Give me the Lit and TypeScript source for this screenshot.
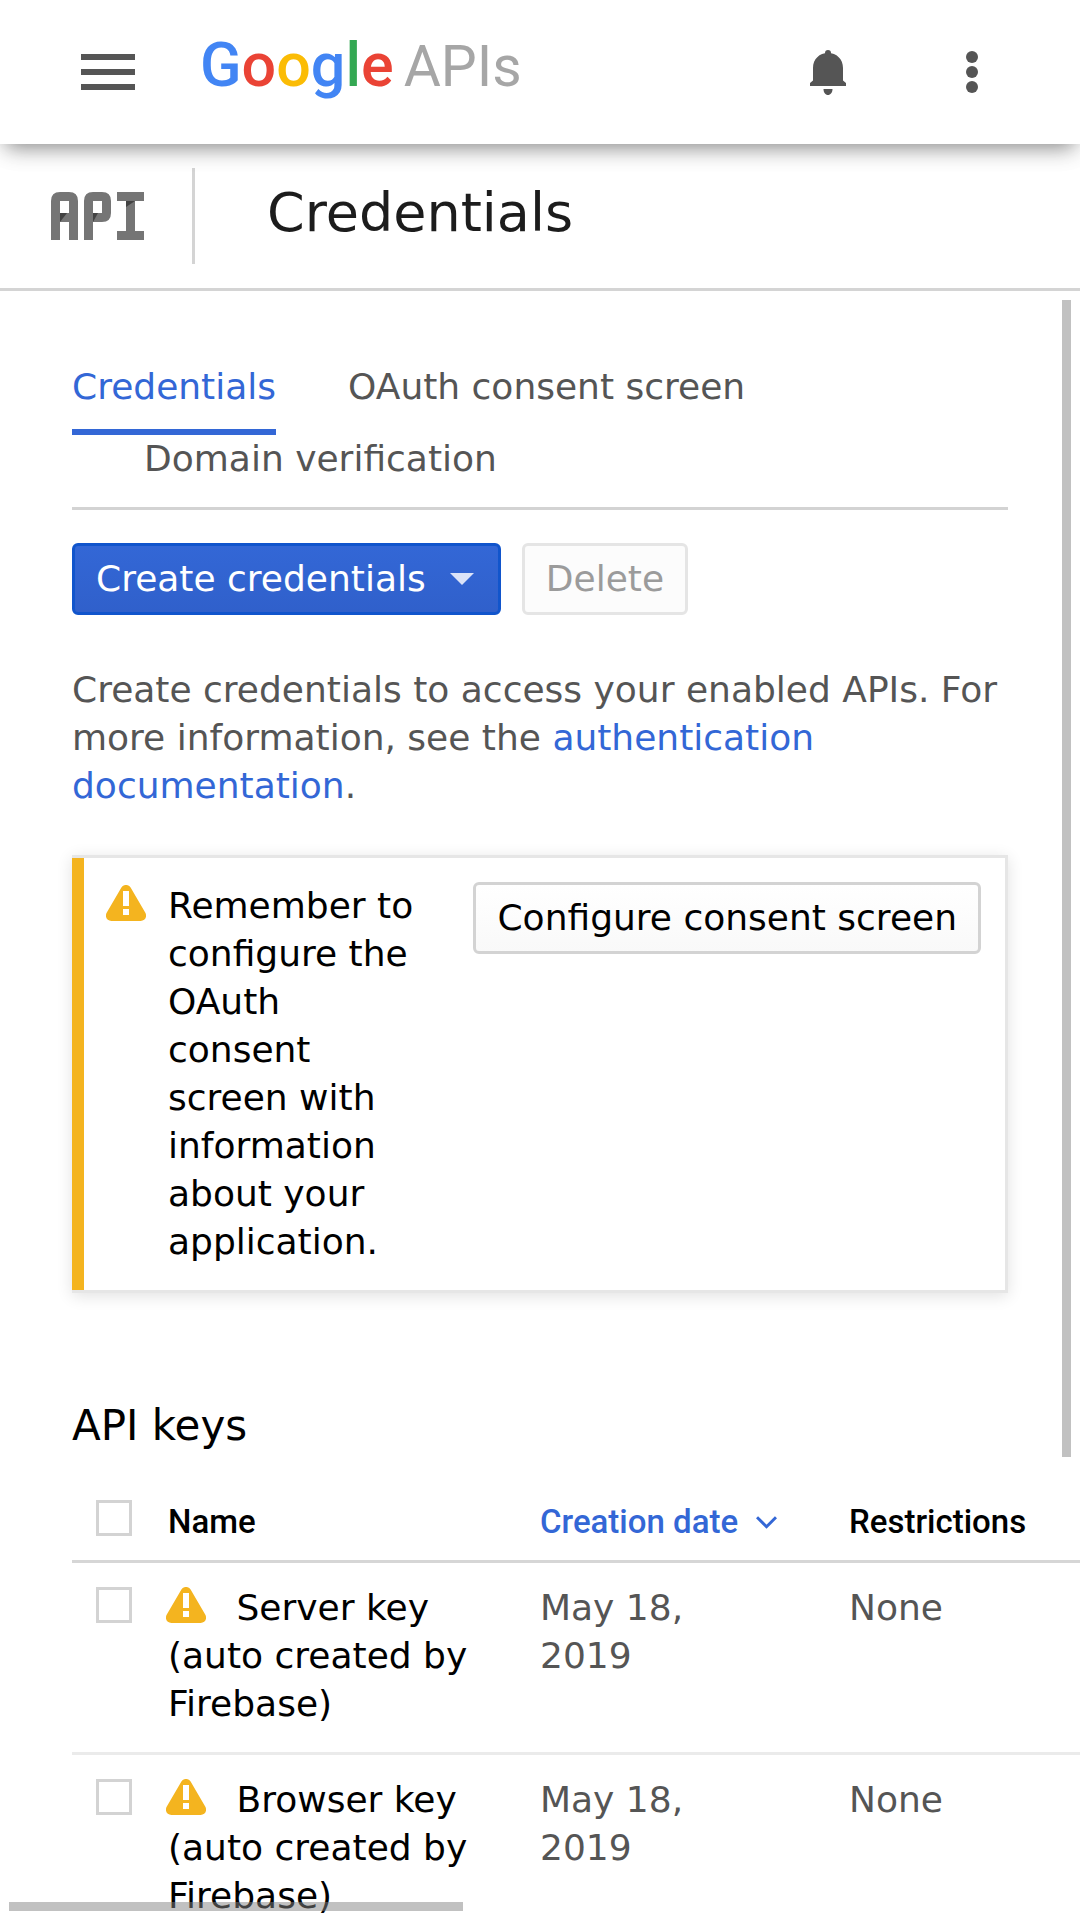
import { LitElement, html, css, svg } from "lit";
import { customElement, property } from "lit/decorators.js";

interface ApiKey {
  id: string;
  name: string;
  created: string;
  restrictions: string;
}

const KEYS: ApiKey[] = [
  { id: "server", name: "Server key (auto created by Firebase)", created: "May 18, 2019", restrictions: "None" },
  { id: "browser", name: "Browser key (auto created by Firebase)", created: "May 18, 2019", restrictions: "None" },
];

const TABS = ["Credentials", "OAuth consent screen", "Domain verification"];

const warningIcon = html`<svg class="warning" width="40" height="36" viewBox="0 0 40 36" role="img" aria-label="Warning">
  <path fill="#f4b41f" d="M15.4 2.6C17.4-.9 22.6-.9 24.6 2.6L39.2 27.6C41.6 31.8 38.9 36 34.6 36H5.4C1.1 36-1.6 31.8.8 27.6Z" />
  <path fill="#fff" d="M17 6h6v15h-6zM17 24h6v6h-6z" />
</svg>`;

const foldedShade = (points: string) => svg`<polygon fill="#424242" points=${points} />`;

@customElement("console-header")
class ConsoleHeader extends LitElement {
  static styles = css`
    :host {
      display: block;
      flex: none;
      position: relative;
      z-index: 1;
      background: #fff;
      box-shadow: 0 9px 20px -6px rgba(0, 0, 0, 0.46), 0 6px 30px rgba(0, 0, 0, 0.05);
    }
    .bar {
      display: flex;
      align-items: center;
      height: 144px;
      padding: 0 102px 0 81px;
    }
    button {
      display: flex;
      padding: 0;
      border: 0;
      background: none;
      color: #555;
      cursor: pointer;
    }
    svg {
      fill: currentColor;
    }
    .logo {
      display: flex;
      align-items: baseline;
      gap: 10px;
      margin-left: 65px;
      padding-bottom: 12px;
      font-family: Roboto, sans-serif;
      font-size: 61px;
      font-weight: 500;
      line-height: 72px;
      text-decoration: none;
    }
    .product {
      color: #a6a6a6;
      font-size: 57px;
      font-weight: 400;
    }
    .blue {
      color: #4285f4;
    }
    .red {
      color: #ea4335;
    }
    .yellow {
      color: #fbbc05;
    }
    .green {
      color: #34a853;
    }
    .actions {
      display: flex;
      align-items: center;
      gap: 120px;
      margin-left: auto;
    }
  `;

  render() {
    return html`<header class="bar">
      <button aria-label="Main menu">
        <svg width="54" height="36" viewBox="0 0 54 36"><path d="M0 0h54v6H0zM0 15h54v6H0zM0 30h54v6H0z" /></svg>
      </button>
      <a class="logo" href="#home"
        ><span><span class="blue">G</span><span class="red">o</span><span class="yellow">o</span><span class="blue">g</span><span class="green">l</span><span class="red">e</span></span
        ><span class="product">APIs</span></a
      >
      <div class="actions">
        <button aria-label="Notifications">
          <svg width="36" height="45" viewBox="0 0 36 45">
            <circle cx="18" cy="3" r="3" />
            <path d="M3 18C3 9 9.500 3 18 3S33 9 33 18V30.500L36 33V36H0V33L3 30.500ZM13.500 39H22.500C22.500 42.500 20.500 45 18 45S13.500 42.500 13.500 39Z" />
          </svg>
        </button>
        <button aria-label="More options">
          <svg width="12" height="42" viewBox="0 0 12 42"><circle cx="6" cy="6" r="6" /><circle cx="6" cy="21" r="6" /><circle cx="6" cy="36" r="6" /></svg>
        </button>
      </div>
    </header>`;
  }
}

@customElement("section-title")
class SectionTitle extends LitElement {
  @property() heading = "";

  static styles = css`
    :host {
      display: flex;
      flex: none;
      align-items: center;
      height: 144px;
      border-bottom: 3px solid #d4d4d4;
      background: #fff;
    }
    .mark {
      display: flex;
      align-items: center;
      height: 96px;
      padding: 0 48px 0 51px;
      border-right: 3px solid #d4d4d4;
    }
    h1 {
      margin: 0;
      padding: 0 0 6px 72px;
      color: #1c1c1c;
      font-size: 54px;
      font-weight: 400;
      line-height: 72px;
    }
  `;

  render() {
    return html`<div class="mark">
        <svg width="93" height="48" viewBox="0 0 93 48" role="img" aria-label="APIs and services">
          <g fill="#757575">
            <path fill-rule="evenodd" d="M0 48V9Q0 0 9 0H18Q27 0 27 9V48H18V30H9V48ZM9 9V21H18V9Z" />
            <path fill-rule="evenodd" d="M33 48V9Q33 0 42 0H51Q60 0 60 9V21Q60 30 51 30H42V48ZM42 9V21H51V9Z" />
            <path d="M66 0H93V9H84V39H93V48H66V39H75V9H66Z" />
          </g>
          ${foldedShade("9,21 16,21 9,30")} ${foldedShade("42,21 47,21 42,30")} ${foldedShade("75,9 84,9 75,15")}
        </svg>
      </div>
      <h1>${this.heading}</h1>`;
  }
}

@customElement("consent-notice")
class ConsentNotice extends LitElement {
  static styles = css`
    :host {
      display: block;
      border: 3px solid #e6e6e6;
      border-left: 0;
      box-shadow: 0 3px 15px rgba(0, 0, 0, 0.12);
      color: #000;
    }
    .body {
      display: flex;
      align-items: flex-start;
      padding: 24px 24px 24px 22px;
      border-left: 12px solid #f4b41f;
    }
    .warning {
      flex: none;
      margin-top: 3px;
    }
    p {
      flex: 1;
      margin: 0 48px 0 22px;
    }
    button {
      flex: none;
      padding: 9px 21px;
      border: 3px solid #d3d3d3;
      border-radius: 6px;
      background: linear-gradient(#fff, #f9f9f9);
      color: #000;
      font: inherit;
      cursor: pointer;
    }
  `;

  render() {
    return html`<div class="body">
      ${warningIcon}
      <p>Remember to configure the OAuth consent screen with information about your application.</p>
      <button>Configure consent screen</button>
    </div>`;
  }
}

@customElement("key-table")
class KeyTable extends LitElement {
  @property({ attribute: false }) keys: ApiKey[] = [];

  static styles = css`
    :host {
      display: block;
    }
    table {
      width: 2436px;
      border-collapse: separate;
      border-spacing: 0;
      table-layout: fixed;
      text-align: left;
    }
    .col-select {
      width: 72px;
    }
    .col-name {
      width: 372px;
    }
    .col-date {
      width: 309px;
    }
    th,
    td {
      padding: 21px 24px 24px;
      vertical-align: top;
    }
    th {
      padding-top: 22px;
      padding-bottom: 14px;
      border-bottom: 3px solid #d6d6d6;
      color: #000;
      font: 500 33px/48px Roboto, sans-serif;
      white-space: nowrap;
    }
    td {
      border-bottom: 3px solid #ebebeb;
    }
    td.name {
      color: #000;
    }
    td.date {
      padding-right: 72px;
    }
    .select {
      padding-top: 21px;
      padding-right: 0;
    }
    input {
      display: block;
      appearance: none;
      box-sizing: border-box;
      width: 36px;
      height: 36px;
      margin: 3px 0 0;
      border: 3px solid #d3d3d3;
      background: #fff;
    }
    .sort {
      display: flex;
      align-items: center;
      gap: 18px;
      padding: 0;
      border: 0;
      background: none;
      color: #3367d6;
      font: inherit;
    }
    .warning {
      margin: 0 19px 0 -2px;
      vertical-align: -3px;
    }
  `;

  render() {
    return html`<table>
      <colgroup>
        <col class="col-select" />
        <col class="col-name" />
        <col class="col-date" />
        <col />
      </colgroup>
      <thead>
        <tr>
          <th class="select" scope="col"><input type="checkbox" aria-label="Select all keys" /></th>
          <th scope="col">Name</th>
          <th scope="col">
            <button class="sort">
              Creation date
              <svg width="21" height="13" viewBox="0 0 21 13" fill="none" stroke="currentColor" stroke-width="3" aria-hidden="true">
                <path d="M1 1.200L10.500 10.700L20 1.200" />
              </svg>
            </button>
          </th>
          <th scope="col">Restrictions</th>
        </tr>
      </thead>
      <tbody>
        ${this.keys.map(
          (key) => html`<tr>
            <td class="select"><input type="checkbox" id=${key.id} aria-label=${key.name} /></td>
            <td class="name">${warningIcon} ${key.name}</td>
            <td class="date">${key.created}</td>
            <td>${key.restrictions}</td>
          </tr>`
        )}
      </tbody>
    </table>`;
  }
}

@customElement("app-root")
class AppRoot extends LitElement {
  static styles = css`
    :host {
      display: flex;
      flex-direction: column;
      height: 100vh;
      overflow: hidden;
      background: #fff;
      color: #555;
      font: 36px/48px "DejaVu Sans", sans-serif;
    }
    .view {
      display: flex;
      flex: 1;
      min-height: 0;
      position: relative;
    }
    main {
      flex: 1;
      min-width: 0;
      padding: 72px;
      overflow: auto;
      scrollbar-width: none;
    }
    a {
      color: #3367d6;
      text-decoration: none;
    }
    .tabs {
      display: flex;
      flex-wrap: wrap;
      border-bottom: 3px solid #d3d3d3;
    }
    .tab {
      padding-bottom: 18px;
      border-bottom: 6px solid transparent;
      margin-left: 72px;
      color: #555;
    }
    .tab:first-child {
      margin-left: 0;
      border-color: #3367d6;
      color: #3367d6;
    }
    .toolbar {
      display: flex;
      gap: 21px;
      margin-top: 33px;
    }
    .toolbar button {
      display: flex;
      align-items: center;
      gap: 24px;
      padding: 9px 21px;
      border: 3px solid #e5e5e5;
      border-radius: 6px;
      background: #fcfcfc;
      color: #9b9b9b;
      font: inherit;
    }
    .toolbar .primary {
      padding-right: 24px;
      border-color: #1155cc;
      background: linear-gradient(#3367d6, #3060cb);
      color: #fff;
    }
    .intro {
      margin: 51px 0 45px;
    }
    h2 {
      margin: 109px 0 26px;
      color: #000;
      font-size: 42px;
      font-weight: 400;
      line-height: 48px;
    }
    .thumb {
      position: absolute;
      background: rgba(132, 132, 132, 0.5);
    }
    .vertical {
      top: 9px;
      right: 9px;
      width: 9px;
      height: 71%;
    }
    .horizontal {
      bottom: 9px;
      left: 9px;
      width: 42%;
      height: 9px;
    }
  `;

  render() {
    return html`<console-header></console-header>
      <section-title heading="Credentials"></section-title>
      <div class="view">
        <main>
          <nav class="tabs">${TABS.map((tab) => html`<a class="tab" href="#tab">${tab}</a>`)}</nav>
          <div class="toolbar">
            <button class="primary">
              Create credentials
              <svg width="24" height="12" viewBox="0 0 24 12" aria-hidden="true"><path fill="#dbe3f8" d="M0 0H24L12 12Z" /></svg>
            </button>
            <button disabled>Delete</button>
          </div>
          <p class="intro">
            Create credentials to access your enabled APIs. For more information, see the
            <a href="#docs">authentication documentation</a>.
          </p>
          <consent-notice></consent-notice>
          <h2>API keys</h2>
          <key-table .keys=${KEYS}></key-table>
        </main>
        <div class="thumb vertical"></div>
        <div class="thumb horizontal"></div>
      </div>`;
  }
}
